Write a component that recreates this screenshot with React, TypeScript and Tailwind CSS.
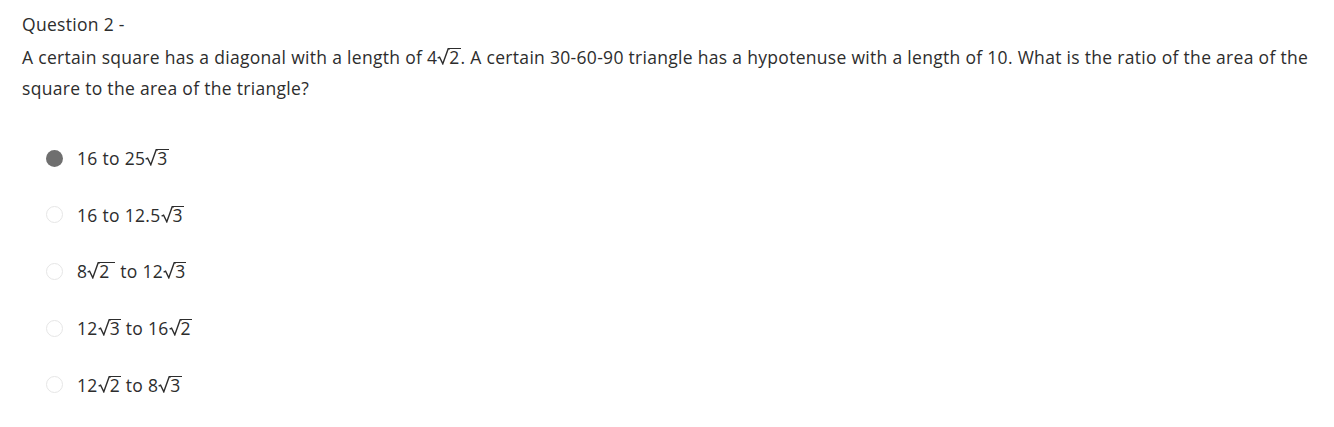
import React from "react";

function Sqrt({ children }: { children: React.ReactNode }) {
  return (
    <span className="relative inline-block pl-[12px] leading-[15px]">
      <svg
        className="absolute left-0 top-0"
        width="13"
        height="17"
        viewBox="0 0 13 17"
        fill="none"
        stroke="currentColor"
        strokeWidth="1.4"
        strokeLinejoin="miter"
      >
        <path d="M0.6 10.2 L2.6 9.2 L5.8 15.8 L11.2 0.7 L13 0.7" />
      </svg>
      <span className="inline-block border-t-[1.4px] border-current leading-[15px] pt-[1px] pr-[1px]">
        {children}
      </span>
    </span>
  );
}

function Radio({ checked }: { checked?: boolean }) {
  return checked ? (
    <span className="block h-[17px] w-[17px] shrink-0 rounded-full bg-[#6f6f6f]" />
  ) : (
    <span className="block h-[17px] w-[17px] shrink-0 rounded-full border-[1.5px] border-[#e6e6e6] bg-white" />
  );
}

const options: { checked?: boolean; label: React.ReactNode }[] = [
  {
    checked: true,
    label: (
      <>
        16 to 25<Sqrt>3</Sqrt>
      </>
    ),
  },
  {
    label: (
      <>
        16 to 12.5<Sqrt>3</Sqrt>
      </>
    ),
  },
  {
    label: (
      <>
        8<Sqrt>2&nbsp;</Sqrt> to 12<Sqrt>3</Sqrt>
      </>
    ),
  },
  {
    label: (
      <>
        12<Sqrt>3</Sqrt> to 16<Sqrt>2</Sqrt>
      </>
    ),
  },
  {
    label: (
      <>
        12<Sqrt>2</Sqrt> to 8<Sqrt>3</Sqrt>
      </>
    ),
  },
];

export default function App() {
  return (
    <div
      className="min-h-[427px] w-full bg-white pl-[22px] pr-[20px] pt-[12px] text-[#2d2d2d] tracking-[0.3px]"
      style={{ fontFamily: "'Open Sans', Lato, sans-serif" }}
    >
      <h2 className="text-[17.5px] leading-[24px] font-normal">Question 2 -</h2>
      <p className="mt-[6px] text-[17.5px] leading-[31px]">
        A certain square has a diagonal with a length of 4<Sqrt>2</Sqrt>. A certain 30-60-90 triangle has a
        hypotenuse with a length of 10. What is the ratio of the area of the square to the area of the triangle?
      </p>
      <ul className="mt-[43px] flex flex-col gap-[34.7px] pl-[24px]">
        {options.map((o, i) => (
          <li key={i} className="flex h-[22px] items-center gap-[14px] text-[17.5px]">
            <Radio checked={o.checked} />
            <span className="leading-[22px]">{o.label}</span>
          </li>
        ))}
      </ul>
    </div>
  );
}
